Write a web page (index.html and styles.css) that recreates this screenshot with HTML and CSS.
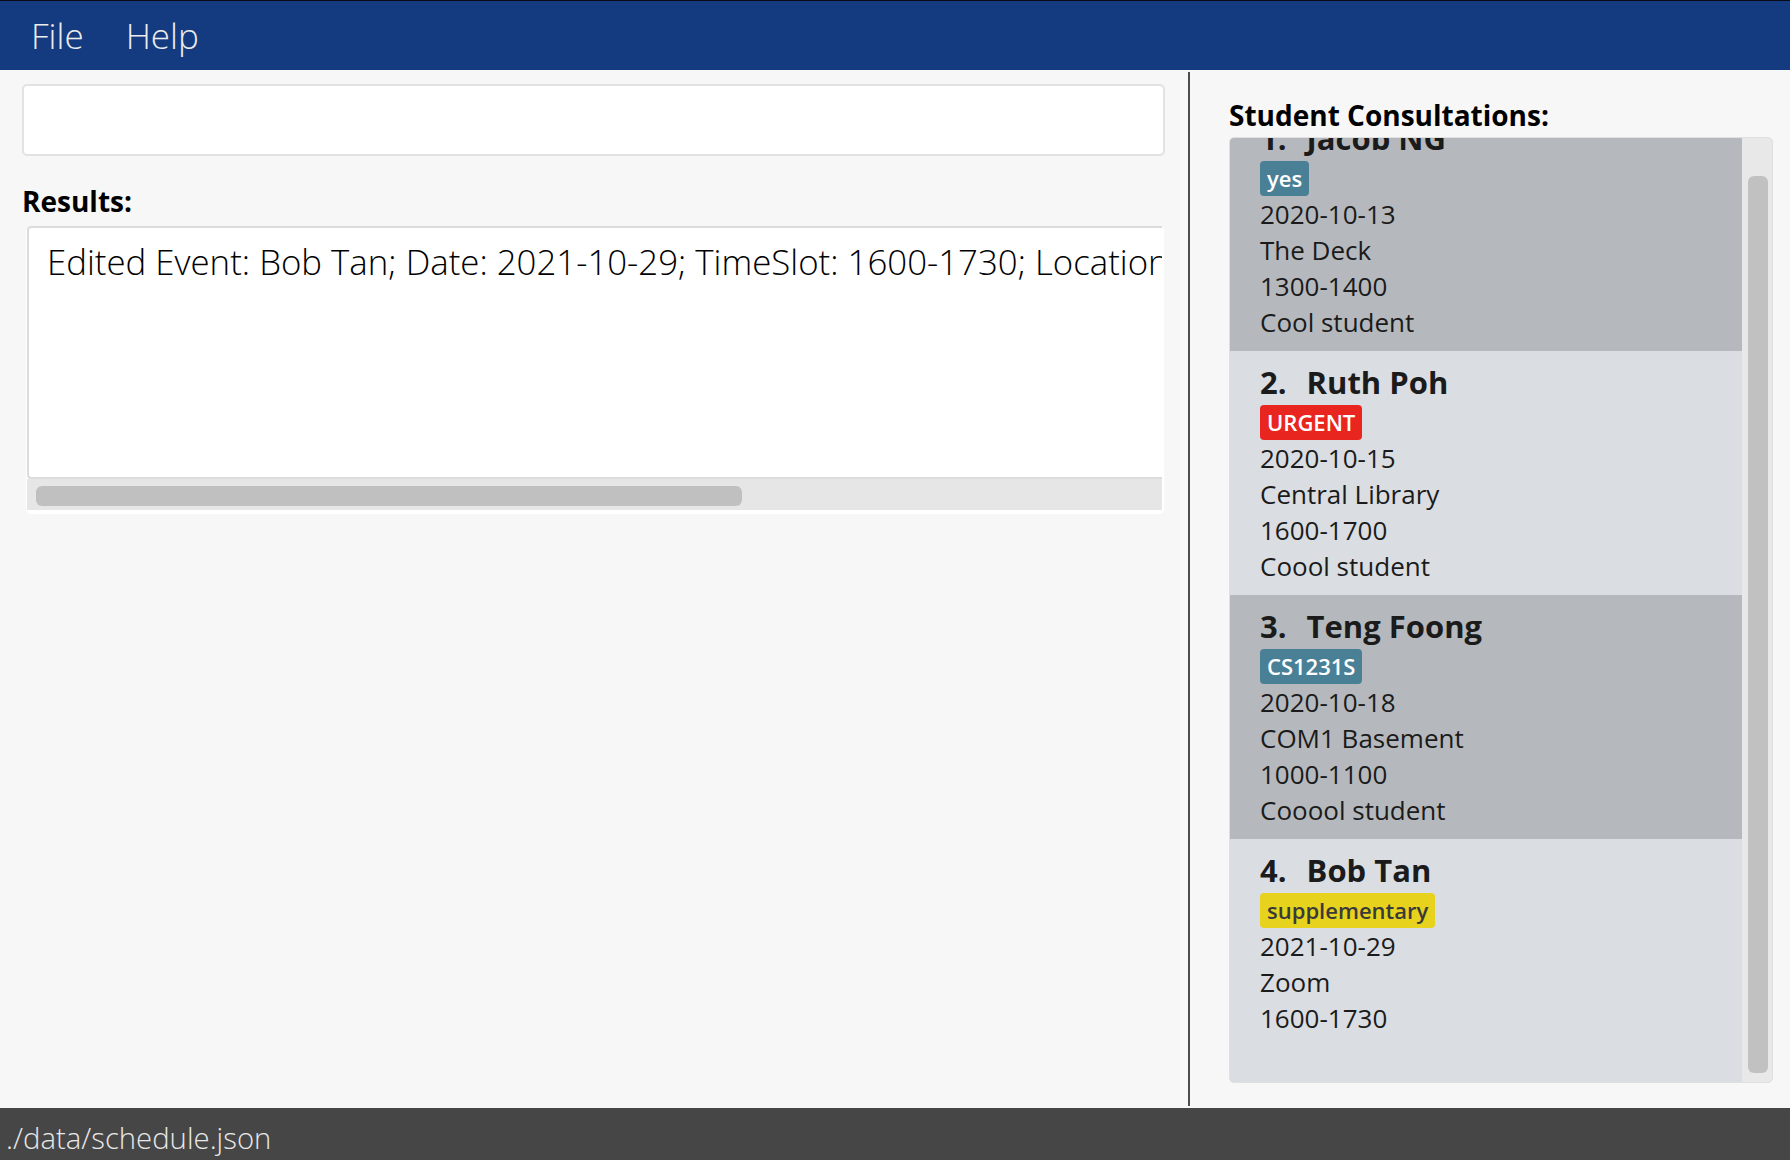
FILE: index.html
```html
<!DOCTYPE html>
<html lang="en">
<head>
<meta charset="utf-8">
<title>Schedule</title>
<link rel="stylesheet" href="styles.css">
</head>
<body>
<div class="app">
  <header class="menubar">
    <span class="menu-item">File</span>
    <span class="menu-item">Help</span>
  </header>
  <main class="main">
    <section class="left-pane">
      <div class="command-box"></div>
      <div class="section-label">Results:</div>
      <div class="results">
        <div class="results-text">Edited Event: Bob Tan; Date: 2021-10-29; TimeSlot: 1600-1730; Location: Zoom; Description: ; Tags: [supplementary]</div>
        <div class="hscroll"><div class="hthumb"></div></div>
      </div>
    </section>
    <div class="divider"></div>
    <section class="right-pane">
      <div class="section-label">Student Consultations:</div>
      <div class="list">
        <div class="rows">
          <div class="row row-dark row-first">
            <div class="name"><span class="idx">1.</span>Jacob NG</div>
            <div class="tags"><span class="tag tag-blue">yes</span></div>
            <div class="line">2020-10-13</div>
            <div class="line">The Deck</div>
            <div class="line">1300-1400</div>
            <div class="line">Cool student</div>
          </div>
          <div class="row row-light">
            <div class="name"><span class="idx">2.</span>Ruth Poh</div>
            <div class="tags"><span class="tag tag-red">URGENT</span></div>
            <div class="line">2020-10-15</div>
            <div class="line">Central Library</div>
            <div class="line">1600-1700</div>
            <div class="line">Coool student</div>
          </div>
          <div class="row row-dark">
            <div class="name"><span class="idx">3.</span>Teng Foong</div>
            <div class="tags"><span class="tag tag-blue">CS1231S</span></div>
            <div class="line">2020-10-18</div>
            <div class="line">COM1 Basement</div>
            <div class="line">1000-1100</div>
            <div class="line">Cooool student</div>
          </div>
          <div class="row row-light">
            <div class="name"><span class="idx">4.</span>Bob Tan</div>
            <div class="tags"><span class="tag tag-yellow">supplementary</span></div>
            <div class="line">2021-10-29</div>
            <div class="line">Zoom</div>
            <div class="line">1600-1730</div>
            <div class="line"></div>
          </div>
        </div>
        <div class="vscroll"><div class="vthumb"></div></div>
      </div>
    </section>
  </main>
  <footer class="statusbar">./data/schedule.json</footer>
</div>
</body>
</html>
```

FILE: styles.css
```css
* { box-sizing: border-box; }
html, body { margin: 0; padding: 0; }
body {
  font-family: "Open Sans", "Noto Sans", sans-serif;
  background: #f7f7f7;
  color: #000;
}
.app {
  width: 1790px;
  height: 1160px;
  display: grid;
  grid-template-rows: 70px 1fr 52px;
  overflow: hidden;
}
.menubar {
  background: #143a7f;
  border-top: 1px solid #0a0a14;
  display: flex;
  align-items: center;
  padding-left: 31px;
  gap: 42px;
}
.menu-item {
  color: #ececec;
  font-weight: 300;
  font-size: 35px;
  line-height: 40px;
}
.main {
  display: flex;
  min-height: 0;
}
.left-pane {
  width: 1188px;
  flex: none;
  padding: 14px 23px 0 22px;
}
.command-box {
  height: 72px;
  background: #fff;
  border: 2px solid #e2e2e2;
  border-radius: 5px;
}
.section-label {
  font-weight: 700;
  font-size: 28px;
  line-height: 38px;
  color: #000;
}
.left-pane .section-label {
  margin-top: 26px;
}
.results {
  margin: 6px 1px 0 4px;
  background: #fff;
  border-radius: 5px;
  padding: 0 2px 4px 1px;
}
.results-text {
  height: 253px;
  border: 2px solid #dcdcdc;
  border-right: none;
  border-radius: 4px 0 0 4px;
  padding: 10px 0 0 18px;
  font-size: 34.8px;
  font-weight: 300;
  color: #000;
  white-space: nowrap;
  overflow: hidden;
}
.hscroll {
  height: 31px;
  background: #e6e6e6;
  padding: 7px 0 0 9px;
}
.hthumb {
  width: 706px;
  height: 20px;
  background: #c0c0c0;
  border-radius: 6px;
}
.divider {
  width: 2px;
  flex: none;
  background: #4d4d4d;
  margin: 2px 0 2px 0;
}
.right-pane {
  flex: 1;
  padding: 26px 17px 0 39px;
}
.list {
  margin-top: 3px;
  height: 946px;
  display: flex;
  border: 1px solid #e0e0e0;
  border-radius: 5px;
  background: #e8e8e8;
  overflow: hidden;
}
.rows {
  width: 512px;
  flex: none;
  overflow: hidden;
}
.row {
  height: 244px;
  padding: 11px 0 0 30px;
  color: #1b1b1b;
}
.row-first { margin-top: -31px; }
.row-dark { background: #b5b9bd; }
.row-light { background: #dadee2; }
.name {
  font-weight: 700;
  font-size: 31px;
  line-height: 40px;
  white-space: nowrap;
}
.idx {
  margin-right: 20px;
}
.tags {
  margin-top: 3px;
  display: flex;
}
.tag {
  display: inline-block;
  height: 35px;
  line-height: 35px;
  padding: 0 7px;
  font-size: 22px;
  font-weight: 600;
  color: #fff;
  border-radius: 4px;
}
.tag-blue { background: #4a8096; }
.tag-red { background: #e8261f; }
.tag-yellow { background: #e7d31d; color: #3a3a3a; }
.line {
  font-size: 26px;
  line-height: 36px;
  height: 36px;
}
.vscroll {
  flex: 1;
  padding: 38px 4px 9px 6px;
}
.vthumb {
  height: 100%;
  background: #c1c1c1;
  border-radius: 6px;
}
.statusbar {
  background: #464646;
  color: #e8e8e8;
  font-weight: 300;
  font-size: 29.3px;
  line-height: 40px;
  padding: 10px 0 0 6px;
  white-space: nowrap;
}
```
